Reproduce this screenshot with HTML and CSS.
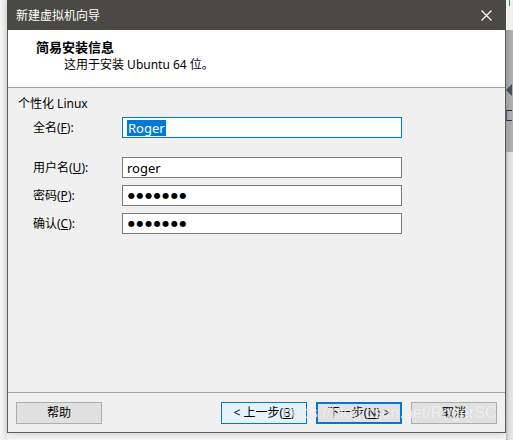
FILE: index.html
```html
<!DOCTYPE html>
<html lang="zh-CN">
<head>
<meta charset="utf-8">
<title>新建虚拟机向导</title>
<link rel="stylesheet" href="styles.css">
</head>
<body>
<div class="page">
  <div class="shadow-left"></div>
  <div class="window">
    <div class="titlebar">
      <span class="title">新建虚拟机向导</span>
      <span class="close">
        <svg width="11" height="11" viewBox="0 0 11 11"><path d="M0.5 0.5 L10.5 10.5 M10.5 0.5 L0.5 10.5" stroke="#ffffff" stroke-width="1.2" fill="none"/></svg>
      </span>
    </div>
    <div class="header">
      <div class="header-title">简易安装信息</div>
      <div class="header-sub">这用于安装 Ubuntu 64 位。</div>
    </div>
    <div class="content">
      <div class="group-title">个性化 Linux</div>
      <div class="form">
        <label class="label">全名(<u>F</u>):</label>
        <div class="input focused"><span class="sel">Roger</span></div>
        <label class="label row2">用户名(<u>U</u>):</label>
        <div class="input row2">roger</div>
        <label class="label">密码(<u>P</u>):</label>
        <div class="input"><span class="dots">●●●●●●●</span></div>
        <label class="label">确认(<u>C</u>):</label>
        <div class="input"><span class="dots">●●●●●●●</span></div>
      </div>
    </div>
    <div class="footer">
      <button class="btn">帮助</button>
      <div class="nav">
        <button class="btn hover">&lt; 上一步(<u>B</u>)</button>
        <button class="btn default">下一步(<u>N</u>) &gt;</button>
        <button class="btn">取消</button>
      </div>
    </div>
  </div>
  <div class="side-right">
    <div class="side-top"><span class="green"></span></div>
    <div class="side-mid"><span class="arrow"></span><span class="side-char"></span></div>
    <div class="side-low"></div>
  </div>
  <div class="watermark">https://blog.csdn.net/RogerSCL</div>
</div>
</body>
</html>
```
FILE: styles.css
```css
* { box-sizing: border-box; }
html, body { margin: 0; padding: 0; }
body {
  width: 513px;
  height: 440px;
  overflow: hidden;
  background: #f4f4f4;
  font-family: "Noto Sans", "Noto Sans CJK SC", sans-serif;
  font-size: 12px;
  color: #000;
}
.page {
  position: relative;
  display: flex;
  width: 513px;
  height: 440px;
}
.shadow-left {
  width: 7px;
  height: 440px;
  background: linear-gradient(to right, #f6f6f6, #e4e4e4);
}
.window {
  width: 499px;
  height: 433px;
  border: 1px solid #5c5c5c;
  border-top: none;
  background: #f0f0f0;
  display: flex;
  flex-direction: column;
  box-shadow: 0 2px 6px rgba(0,0,0,0.12);
}
.titlebar {
  height: 30px;
  flex: none;
  background: #4b4946;
  margin: 0 -1px;
  padding: 0 14px 0 9px;
  display: flex;
  align-items: center;
  justify-content: space-between;
  color: #ffffff;
  font-family: "Noto Sans CJK SC", sans-serif;
  font-size: 12px;
}
.title { line-height: 16px; }
.close { display: flex; align-items: center; height: 11px; }
.header {
  height: 58px;
  flex: none;
  background: #ffffff;
  border-bottom: 1px solid #a0a0a0;
  padding: 9px 0 0 28px;
}
.header-title {
  font-family: "Noto Sans CJK SC", sans-serif;
  font-weight: bold;
  font-size: 13px;
  line-height: 16px;
}
.header-sub {
  margin: 2px 0 0 28px;
  line-height: 16px;
}
.content {
  height: 304px;
  flex: none;
  padding: 8px 0 0 10px;
}
.group-title { line-height: 16px; }
.form {
  margin: 5px 0 0 15px;
  display: grid;
  grid-template-columns: 89px 280px;
  row-gap: 7px;
  align-items: center;
}
.label { line-height: 16px; }
.row2 { margin-top: 12px; }
.input {
  height: 21px;
  background: #ffffff;
  border: 1px solid #7a7a7a;
  padding: 0 0 0 4px;
  display: flex;
  align-items: center;
  line-height: 16px;
  font-size: 13px;
}
.input.focused { border-color: #0078d7; }
.sel {
  background: #0078d7;
  color: #ffffff;
  padding: 0 1px;
  height: 16px;
  line-height: 16px;
}
.dots {
  font-family: "DejaVu Sans", sans-serif;
  font-size: 8px;
  letter-spacing: 1.6px;
  line-height: 10px;
  padding-left: 1px;
}
.footer {
  flex: 1;
  border-top: 1px solid #a0a0a0;
  padding: 9px 8px 0 8px;
  display: flex;
  align-items: flex-start;
}
.nav {
  margin-left: auto;
  display: flex;
  gap: 9px;
}
.btn {
  width: 86px;
  height: 22px;
  margin: 0;
  padding: 0;
  background: #e1e1e1;
  border: 1px solid #adadad;
  font-family: "Noto Sans", "Noto Sans CJK SC", sans-serif;
  font-size: 12px;
  line-height: 16px;
  color: #000;
}
.btn.hover { background: #e5f1fb; border-color: #0078d7; }
.btn.default { border: 2px solid #0078d7; }
.side-right {
  width: 7px;
  height: 440px;
  display: flex;
  flex-direction: column;
  overflow: hidden;
}
.side-top {
  height: 30px;
  background: #f0f0f0;
  position: relative;
}
.green {
  position: absolute;
  left: 3px;
  top: 0;
  width: 1px;
  height: 6px;
  background: #2e9b4e;
}
.side-mid {
  height: 122px;
  background: linear-gradient(to right, #9c9c9c, #b4b4b4);
  position: relative;
}
.arrow {
  position: absolute;
  left: 0;
  top: 54px;
  width: 0;
  height: 0;
  border-top: 6px solid transparent;
  border-bottom: 6px solid transparent;
  border-right: 6px solid #41505c;
}
.side-char {
  position: absolute;
  left: 0;
  top: 80px;
  width: 6px;
  height: 11px;
  border: 1px solid #2a2a4a;
  border-left-color: #6a3a9a;
  border-right: none;
}
.side-low {
  flex: 1;
  background: linear-gradient(to right, #b9b9b9, #dedede 40%, #e6e6e6);
}
.watermark {
  position: absolute;
  left: 283px;
  top: 403px;
  font-family: "Liberation Sans", sans-serif;
  font-size: 16px;
  line-height: 20px;
  color: rgba(255,255,255,0.7);
  text-shadow: 0 0 1px rgba(150,150,150,0.25);
  white-space: nowrap;
  pointer-events: none;
}
```
